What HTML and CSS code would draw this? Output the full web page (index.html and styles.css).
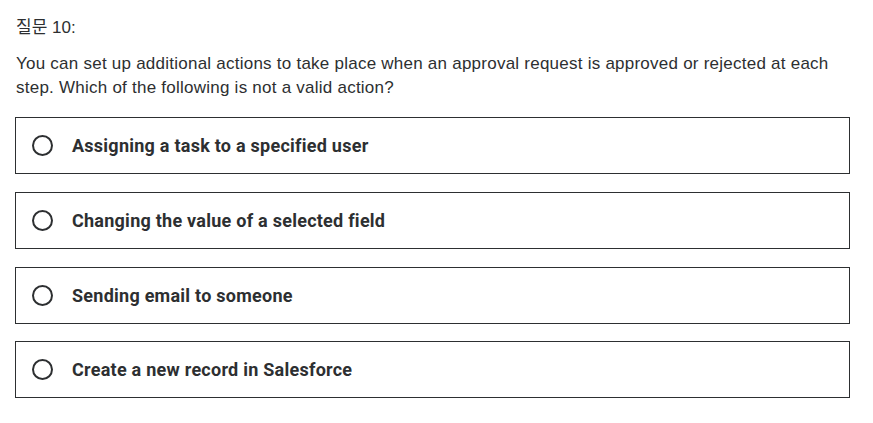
FILE: index.html
```html
<!DOCTYPE html>
<html lang="ko">
<head>
<meta charset="utf-8">
<link rel="stylesheet" href="styles.css">
</head>
<body>
<div class="quiz">
  <div class="q-title">질문 10:</div>
  <p class="q-text">You can set up additional actions to take place when an approval request is approved or rejected at each step. Which of the following is not a valid action?</p>
  <ul class="answers">
    <li class="answer"><span class="radio"></span><span class="label">Assigning a task to a specified user</span></li>
    <li class="answer"><span class="radio"></span><span class="label">Changing the value of a selected field</span></li>
    <li class="answer"><span class="radio"></span><span class="label">Sending email to someone</span></li>
    <li class="answer"><span class="radio"></span><span class="label">Create a new record in Salesforce</span></li>
  </ul>
</div>
</body>
</html>
```

FILE: styles.css
```css
html, body {
  margin: 0;
  padding: 0;
  background: #fff;
}
body {
  font-family: "Liberation Sans", Arial, "Noto Sans CJK KR", sans-serif;
  color: #2d2f31;
}
.quiz {
  padding: 16px 23px 0 15px;
}
.q-title {
  font-size: 17px;
  line-height: 24px;
  padding-left: 1px;
  font-family: "Liberation Sans", "Noto Sans CJK KR", sans-serif;
}
.q-text {
  margin: 12px 0 0 1px;
  font-size: 17px;
  line-height: 24px;
  letter-spacing: 0.24px;
}
.answers {
  list-style: none;
  margin: 17px 0 0 0;
  padding: 0;
  display: flex;
  flex-direction: column;
  gap: 17.8px;
}
.answer {
  height: 55px;
  border: 1px solid #2d2f31;
  display: flex;
  align-items: center;
  padding-left: 16px;
}
.radio {
  width: 17px;
  height: 17px;
  border: 2px solid #2d2f31;
  border-radius: 50%;
  flex: none;
}
.label {
  margin-left: 19px;
  font-family: Roboto, "Liberation Sans", sans-serif;
  font-weight: 700;
  font-size: 18px;
  letter-spacing: 0.25px;
}
```
